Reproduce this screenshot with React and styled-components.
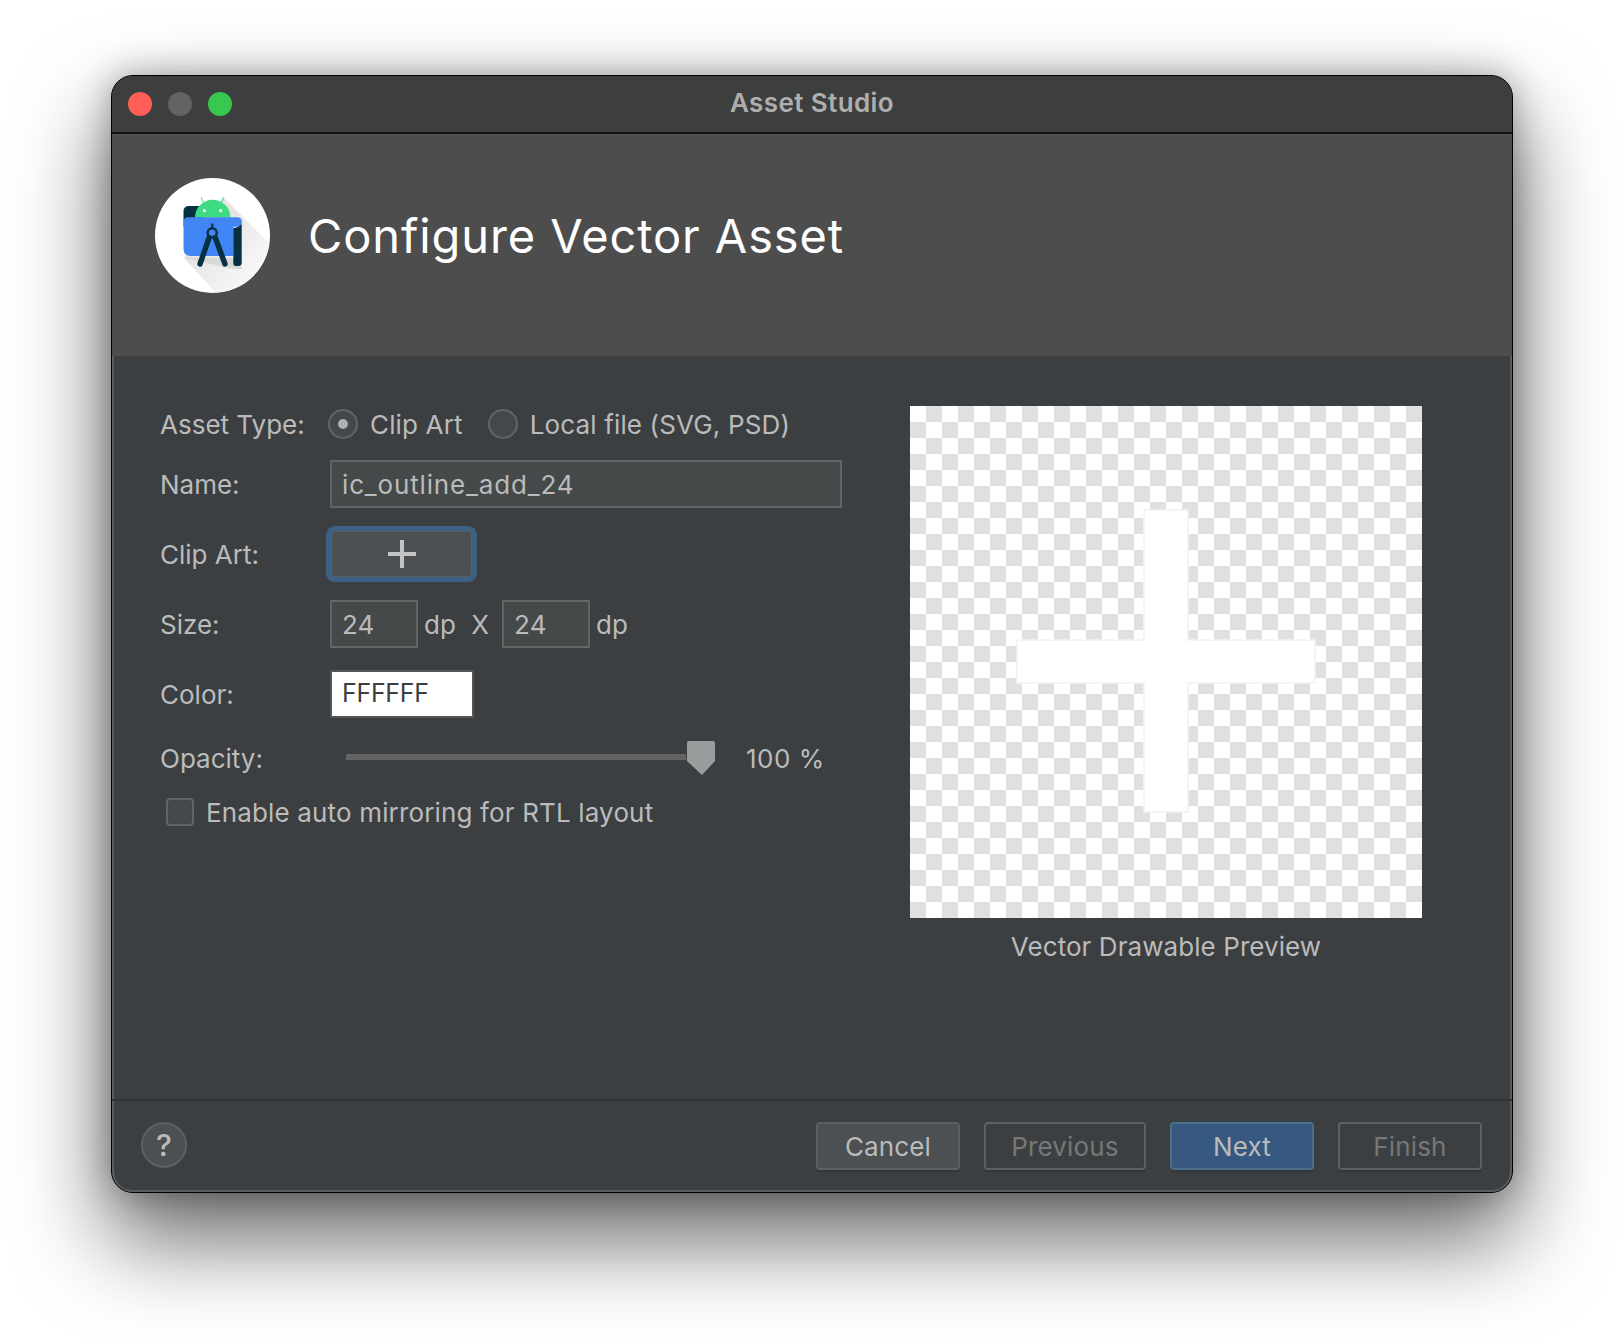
import React from 'react';
import styled, { createGlobalStyle } from 'styled-components';

const GlobalStyle = createGlobalStyle`
  html, body {
    margin: 0;
    padding: 0;
    background: #ffffff;
  }
  body {
    font-family: Inter, "Liberation Sans", sans-serif;
  }
`;

const Page = styled.div`
  width: 1624px;
  height: 1340px;
  padding: 75px 0 0 111px;
  box-sizing: border-box;
  overflow: hidden;
`;

const Window = styled.div`
  width: 1402px;
  height: 1118px;
  box-sizing: border-box;
  display: flex;
  flex-direction: column;
  background: #3c3f41;
  border: 1px solid #000000;
  border-radius: 22px;
  overflow: hidden;
  box-shadow: 0 44px 90px 4px rgba(0, 0, 0, 0.58), 0 0 34px rgba(0, 0, 0, 0.3);
`;

const TitleBar = styled.div`
  position: relative;
  height: 58px;
  flex: none;
  display: flex;
  align-items: center;
  justify-content: center;
  padding-bottom: 3px;
  box-sizing: border-box;
  background: #3d3e3e;
  border-bottom: 2px solid #141414;
`;

const Lights = styled.div`
  position: absolute;
  left: 16px;
  top: 16px;
  display: flex;
  gap: 16px;
`;

const Light = styled.span`
  width: 24px;
  height: 24px;
  border-radius: 50%;
  background: ${(p) => p.$color};
`;

const WindowTitle = styled.div`
  font-size: 26px;
  font-weight: 600;
  letter-spacing: 0.4px;
  color: #aeaeae;
`;

const Header = styled.div`
  height: 222px;
  flex: none;
  box-sizing: border-box;
  padding: 44px 0 0 43px;
  display: flex;
  align-items: flex-start;
  gap: 38px;
  background: #4d4d4d;
`;

const PageTitle = styled.h1`
  margin: 0;
  height: 115px;
  display: flex;
  align-items: center;
  font-size: 47px;
  font-weight: 400;
  letter-spacing: 0.9px;
  color: #ffffff;
`;

const Body = styled.div`
  flex: 1;
  display: flex;
  padding: 44px 0 0 48px;
  box-shadow: inset 2px 0 #5a5d5e, inset -2px 0 #5a5d5e;
`;

const Form = styled.div`
  width: 750px;
  flex: none;
  display: flex;
  flex-direction: column;
`;

const Row = styled.div`
  display: flex;
  align-items: center;
  height: ${(p) => p.$height || 48}px;
  margin-top: ${(p) => p.$top || 0}px;
  font-size: 26px;
  letter-spacing: 0.15px;
  color: #bbbbbb;
  white-space: nowrap;
`;

const Label = styled.div`
  width: 170px;
  flex: none;
  letter-spacing: 0;
`;

const RadioRing = styled.span`
  width: 30px;
  height: 30px;
  box-sizing: border-box;
  flex: none;
  display: flex;
  align-items: center;
  justify-content: center;
  border: 2px solid #646464;
  border-radius: 50%;
  background: #43494a;
  margin-left: ${(p) => p.$left || 0}px;
  margin-right: 12px;

  &::after {
    content: '';
    width: 10px;
    height: 10px;
    border-radius: 50%;
    background: ${(p) => (p.$checked ? '#aeb0b2' : 'transparent')};
  }
`;

const Input = styled.div`
  width: ${(p) => p.$width}px;
  height: 48px;
  box-sizing: border-box;
  flex: none;
  display: flex;
  align-items: center;
  padding-left: 10px;
  background: #45494a;
  border: 2px solid #646464;
  color: #bbbbbb;
`;

const NameInput = styled(Input)`
  letter-spacing: 0.85px;
`;

const ColorInput = styled(Input)`
  padding-bottom: 2px;
  background: #ffffff;
  border-color: #555555;
  color: #3c3f41;
  font-size: 25px;
  letter-spacing: -0.3px;
`;

const ArtButton = styled.button`
  width: 141px;
  height: 46px;
  margin-left: 1px;
  padding: 0;
  display: flex;
  align-items: center;
  justify-content: center;
  background: #4c5052;
  border: 1px solid #5e6060;
  border-radius: 4px;
  box-shadow: 0 0 0 5px #3d6185;
`;

const Unit = styled.span`
  margin: 0 ${(p) => p.$right || 0}px 0 6px;
`;

const XGap = styled.span`
  width: 13px;
`;

const Slider = styled.div`
  margin-left: 16px;
  width: 369px;
  flex: none;
  display: flex;
  align-items: center;
  gap: 1px;
  height: 48px;
`;

const Track = styled.div`
  flex: 1;
  height: 6px;
  margin-top: -2px;
  background: #646464;
`;

const Thumb = styled.svg`
  flex: none;
`;

const Percent = styled.span`
  margin-left: 31px;
  letter-spacing: 0.5px;
`;

const CheckBox = styled.span`
  width: 28px;
  height: 28px;
  box-sizing: border-box;
  flex: none;
  margin: 0 12px 0 6px;
  background: #43494a;
  border: 2px solid #646464;
  border-radius: 4px;
`;

const PreviewColumn = styled.div`
  margin-top: 6px;
  display: flex;
  flex-direction: column;
  align-items: center;
`;

const Preview = styled.div`
  width: 512px;
  height: 512px;
  display: flex;
  align-items: center;
  justify-content: center;
  background: repeating-conic-gradient(#e0e0e0 0 25%, #ffffff 0 50%) 0 0 / 32px 32px;
`;

const Caption = styled.div`
  margin-top: 13px;
  font-size: 26px;
  letter-spacing: 0.07px;
  color: #bbbbbb;
`;

const Footer = styled.div`
  height: 93px;
  flex: none;
  box-sizing: border-box;
  display: flex;
  align-items: flex-start;
  padding: 21px 30px 0 29px;
  border-top: 2px solid #323232;
  border-radius: 0 0 21px 21px;
  box-shadow: inset 2px 0 #5a5d5e, inset -2px 0 #5a5d5e, inset 0 -2px #5a5d5e;
`;

const Help = styled.div`
  width: 46px;
  height: 46px;
  box-sizing: border-box;
  display: flex;
  align-items: center;
  justify-content: center;
  border: 2px solid #5e6060;
  border-radius: 50%;
  background: #4c5052;
  font-size: 30px;
  font-weight: 500;
  color: #bbbbbb;
`;

const Buttons = styled.div`
  margin-left: auto;
  display: flex;
`;

const ActionButton = styled.button`
  width: ${(p) => p.$width}px;
  height: 48px;
  margin-left: ${(p) => p.$left || 0}px;
  box-sizing: border-box;
  font-family: inherit;
  font-size: 26px;
  letter-spacing: 0.15px;
  color: ${(p) => (p.$disabled ? '#777777' : '#bbbbbb')};
  background: ${(p) => (p.$primary ? '#365880' : p.$disabled ? 'transparent' : '#4c5052')};
  border: 2px solid ${(p) => (p.$primary ? '#4c708c' : '#5e6060')};
  border-radius: 4px;
  box-shadow: 0 2px 0 rgba(0, 0, 0, 0.12);
`;

const AndroidStudioLogo = () => (
  <svg width="115" height="115" viewBox="0 0 115 115">
    <defs>
      <clipPath id="logo-circle">
        <circle cx="57.5" cy="57.5" r="57.5" />
      </clipPath>
      <linearGradient id="logo-shade" x1="0.3" y1="0.3" x2="0.85" y2="0.85">
        <stop offset="0" stopColor="#e4e4e4" />
        <stop offset="1" stopColor="#ffffff" />
      </linearGradient>
    </defs>
    <circle cx="57.5" cy="57.5" r="57.5" fill="#ffffff" />
    <g clipPath="url(#logo-circle)">
      <polygon points="68,19 130,81 130,130 75,130 29,80" fill="url(#logo-shade)" />
    </g>
    <path d="M29 80 L78 80 L88 91 L79 91 Z" fill="#d8d8d8" />
    <rect x="28.5" y="28" width="20" height="24" rx="5" fill="#073042" />
    <path d="M40 39.5 a17.7 17.7 0 0 1 35.4 0 Z" fill="#3ddc84" />
    <path d="M46 19.3 L48.7 25.3 M68.7 19.3 L66 25.3" stroke="#3ddc84" strokeWidth="1" />
    <circle cx="49.3" cy="32.7" r="1.6" fill="#ffffff" />
    <circle cx="65.7" cy="32.7" r="1.6" fill="#ffffff" />
    <path d="M28.5 44 Q28.5 39.3 33.5 39.3 L82 39.3 Q87 39.3 87 44 Q87 48.7 82 48.7 L78.3 48.7 L78.3 78 L36 78 Q28.5 78 28.5 71 Z" fill="#4285f4" />
    <path d="M78.3 50 Q83 50 86.7 46 L86.7 85 Q86.7 88 83.5 88 L81 88 Q78.3 88 78.3 85 Z" fill="#073042" />
    <path d="M57.3 45.5 L57.3 50" stroke="#073042" strokeWidth="2" />
    <circle cx="57.2" cy="54.8" r="4.6" fill="#4285f4" stroke="#073042" strokeWidth="2.4" />
    <path d="M54.2 59.5 L45 86 M60.2 59.5 L70 86" stroke="#073042" strokeWidth="5.4" strokeLinecap="round" />
  </svg>
);

const PlusIcon = () => (
  <svg width="28" height="28" viewBox="0 0 28 28">
    <path d="M12 0h4v12h12v4H16v12h-4V16H0v-4h12z" fill="#c4c4c4" />
  </svg>
);

const PreviewPlus = () => (
  <svg width="300" height="306" viewBox="0 0 300 306">
    <path
      d="M128 1h44v130h127v43H172v129h-44V174H1v-43h127z"
      fill="#ffffff"
      stroke="#f2f2f2"
      strokeWidth="1.5"
    />
  </svg>
);

const SliderThumb = () => (
  <Thumb width="28" height="34" viewBox="0 0 28 34">
    <path d="M2 0h24a2 2 0 0 1 2 2v18L15 34 0 20V2a2 2 0 0 1 2-2z" fill="#9a9d9e" />
  </Thumb>
);

export default function App() {
  return (
    <>
      <GlobalStyle />
      <Page>
        <Window>
          <TitleBar>
            <Lights>
              <Light $color="#ff5f57" />
              <Light $color="#636363" />
              <Light $color="#38c84f" />
            </Lights>
            <WindowTitle>Asset Studio</WindowTitle>
          </TitleBar>
          <Header>
            <AndroidStudioLogo />
            <PageTitle>Configure Vector Asset</PageTitle>
          </Header>
          <Body>
            <Form>
              <Row>
                <Label>Asset Type:</Label>
                <RadioRing $checked $left={-2} />
                Clip Art
                <RadioRing $left={25} />
                Local file (SVG, PSD)
              </Row>
              <Row $top={12}>
                <Label>Name:</Label>
                <NameInput $width={512}>ic_outline_add_24</NameInput>
              </Row>
              <Row $top={23} $height={46}>
                <Label>Clip Art:</Label>
                <ArtButton>
                  <PlusIcon />
                </ArtButton>
              </Row>
              <Row $top={23}>
                <Label>Size:</Label>
                <Input $width={88}>24</Input>
                <Unit $right={15}>dp</Unit>
                X
                <XGap />
                <Input $width={88}>24</Input>
                <Unit>dp</Unit>
              </Row>
              <Row $top={22}>
                <Label>Color:</Label>
                <ColorInput $width={144}>FFFFFF</ColorInput>
              </Row>
              <Row $top={16}>
                <Label>Opacity:</Label>
                <Slider>
                  <Track />
                  <SliderThumb />
                </Slider>
                <Percent>100 %</Percent>
              </Row>
              <Row $top={6}>
                <CheckBox />
                Enable auto mirroring for RTL layout
              </Row>
            </Form>
            <PreviewColumn>
              <Preview>
                <PreviewPlus />
              </Preview>
              <Caption>Vector Drawable Preview</Caption>
            </PreviewColumn>
          </Body>
          <Footer>
            <Help>?</Help>
            <Buttons>
              <ActionButton $width={144}>Cancel</ActionButton>
              <ActionButton $width={162} $left={24} $disabled>Previous</ActionButton>
              <ActionButton $width={144} $left={24} $primary>Next</ActionButton>
              <ActionButton $width={144} $left={24} $disabled>Finish</ActionButton>
            </Buttons>
          </Footer>
        </Window>
      </Page>
    </>
  );
}
